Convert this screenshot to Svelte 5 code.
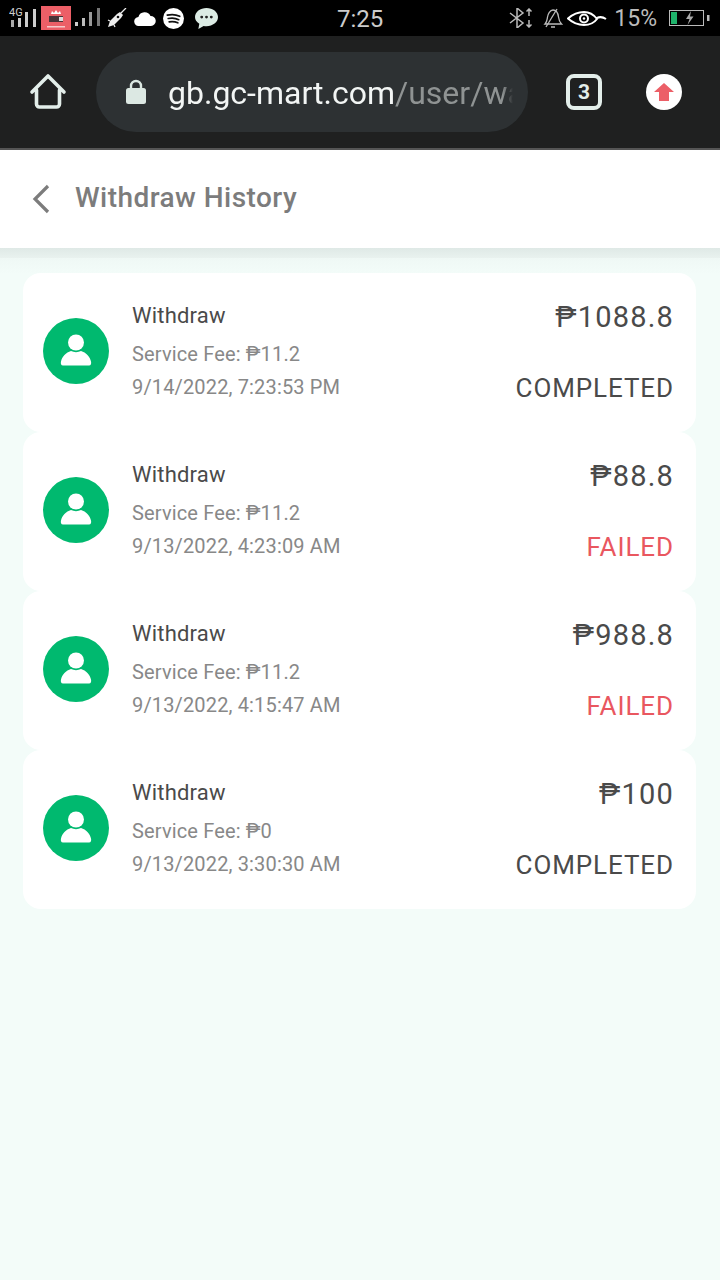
<script>
  const records = [
    { amount: '₱1088.8', fee: '₱11.2', time: '9/14/2022, 7:23:53 PM', status: 'COMPLETED' },
    { amount: '₱88.8', fee: '₱11.2', time: '9/13/2022, 4:23:09 AM', status: 'FAILED' },
    { amount: '₱988.8', fee: '₱11.2', time: '9/13/2022, 4:15:47 AM', status: 'FAILED' },
    { amount: '₱100', fee: '₱0', time: '9/13/2022, 3:30:30 AM', status: 'COMPLETED' }
  ];
</script>

<div class="page">
  <div class="statusbar">
    <div class="status-left">
      <svg width="28" height="22" viewBox="0 0 28 22">
        <text x="0" y="9" class="tiny">4G</text>
        <rect x="2" y="13" width="3" height="7" fill="#aaa" />
        <rect x="9" y="11" width="3" height="9" fill="#ccc" />
        <rect x="16" y="5" width="3" height="15" fill="#ccc" />
        <rect x="24" y="2" width="3" height="18" fill="#ccc" />
      </svg>
      <svg width="30" height="24" viewBox="0 0 30 24">
        <rect width="30" height="24" fill="#ec5f67" />
        <path d="M10 8l1-3 2 2 2-3 2 3 2-2 1 3z" fill="#fff" />
        <rect x="8" y="10" width="14" height="6" fill="#4a3438" />
        <rect x="18" y="11" width="4" height="4" fill="#ddd" />
        <rect x="6" y="20" width="18" height="1.500" fill="#f5c9cb" />
      </svg>
      <svg width="28" height="20" viewBox="0 0 28 20">
        <rect x="0" y="14" width="3" height="4" fill="#ccc" />
        <rect x="7" y="10" width="3" height="8" fill="#bbb" />
        <rect x="14" y="4" width="3" height="14" fill="#999" />
        <rect x="22" y="0" width="3" height="18" fill="#777" />
      </svg>
      <svg width="20" height="20" viewBox="0 0 20 20">
        <path d="M1 19l2-6 7-7 3-2 3 3-2 3-7 7z" fill="#eee" />
        <path d="M14 5l5-5M3 13l-2-1M7 17l1 2" stroke="#eee" stroke-width="1.300" />
        <circle cx="11" cy="9" r="1.300" fill="#111" />
      </svg>
      <svg class="cloud" width="22" height="15" viewBox="0 0 22 15">
        <path d="M5 15a4.500 4.500 0 0 1-.6-9A6.500 6.500 0 0 1 16.500 5 5 5 0 0 1 17 15z" fill="#fff" />
      </svg>
      <svg class="spot" width="21" height="21" viewBox="0 0 22 22">
        <circle cx="11" cy="11" r="11" fill="#fff" />
        <path d="M4.500 7.500c4-1 9-.8 13 1.200M5.500 11c3.500-.8 7.500-.6 11 1.200M6.500 14.500c3-.6 6-.4 9 1" stroke="#111" stroke-width="1.800" fill="none" stroke-linecap="round" />
      </svg>
      <svg class="chat" width="25" height="23" viewBox="0 0 25 24">
        <path d="M12.500 1C19 1 24.500 5 24.500 10.500S19 20 12.500 20c-1 0-2 0-3-.3L4 23l1-5.500C2 15.800.5 13.300.5 10.500.5 5 6 1 12.500 1z" fill="#dcebe4" />
        <circle cx="7.500" cy="10.500" r="1.500" fill="#222" />
        <circle cx="12.500" cy="10.500" r="1.500" fill="#222" />
        <circle cx="17.500" cy="10.500" r="1.500" fill="#222" />
      </svg>
    </div>
    <span class="clock">7:25</span>
    <div class="status-right">
      <svg width="25" height="20" viewBox="0 0 25 20">
        <path d="M1 5l13 10-6 5V0l6 5L1 15" stroke="#bbb" stroke-width="1.500" fill="none" />
        <path d="M20 1v7M17.500 3.500L20 1l2.500 2.500M20 12v7M17.500 16.500L20 19l2.500-2.500" stroke="#bbb" stroke-width="1.500" fill="none" />
      </svg>
      <svg class="bell" width="20" height="20" viewBox="0 0 20 20">
        <path d="M2 16c2-2 2-4 2.500-7S7 2 10 2s5 3 5.500 7 1 5 3 7zM8 19h4" stroke="#bbb" stroke-width="1.300" fill="none" />
        <path d="M14 1L3 19" stroke="#bbb" stroke-width="1.300" />
      </svg>
      <svg class="eye" width="40" height="15" viewBox="0 0 40 15">
        <path d="M1 7.500C6 3 11 1 17 1s10 3 13 7c-3 4-8 6-13 6S6 12 1 7.500zM30 7c3-1.500 6-1 9 1" stroke="#fff" stroke-width="2" fill="none" />
        <circle cx="17" cy="7.500" r="4" fill="none" stroke="#fff" stroke-width="2" />
        <circle cx="17" cy="7.500" r="1.200" fill="#fff" />
      </svg>
      <span class="pct">15%</span>
      <svg class="batt" width="41" height="16" viewBox="0 0 41 16">
        <rect x="0.500" y="0.500" width="34" height="15" fill="none" stroke="#bbb" />
        <rect x="2" y="2" width="6" height="12" fill="#1fb36b" />
        <rect x="38" y="5" width="2.500" height="6" fill="#bbb" />
        <path d="M22 1l-5 8h3.500l-2 6 6-8.500h-3.500z" fill="#aaa" />
      </svg>
    </div>
  </div>

  <div class="toolbar">
    <svg class="home" width="38" height="38" viewBox="0 0 38 38">
      <path d="M3 19L19 3l16 16M7.500 17v14a3 3 0 0 0 3 3h17a3 3 0 0 0 3-3V17" stroke="#e3eeea" stroke-width="3.600" fill="none" stroke-linecap="round" stroke-linejoin="round" />
    </svg>
    <div class="omnibox">
      <svg class="lock" width="20" height="26" viewBox="0 0 20 26">
        <path d="M5 10V7a5 5 0 0 1 10 0v3" stroke="#dce8e3" stroke-width="2.400" fill="none" />
        <rect y="9" width="20" height="16" rx="2.500" fill="#dce8e3" />
      </svg>
      <div class="url"><span class="host">gb.gc-mart.com</span><span class="path">/user/wa</span></div>
    </div>
    <div class="tabs">3</div>
    <div class="update">
      <svg width="20" height="18" viewBox="0 0 20 18">
        <path d="M10 0l10 9h-5v9H5V9H0z" fill="#ec5f67" />
      </svg>
    </div>
  </div>

  <header class="title-bar">
    <svg class="back" width="20" height="30" viewBox="0 0 20 30">
      <path d="M17 2L4 15l13 13" stroke="#7c7c7c" stroke-width="3.200" fill="none" />
    </svg>
    <h1>Withdraw History</h1>
  </header>

  <main class="list">
    {#each records as r}
      <div class="card">
        <div class="avatar">
          <svg width="32" height="32" viewBox="0 0 32 32">
            <circle cx="16" cy="8.500" r="8" fill="#fff" />
            <path d="M3 31.500h26c2 0 2.500-2 2-4-1-5-5-9-10-10.500-3 1.500-7 1.500-10 0C6 18.500 2 22.500 1 27.500c-.5 2 0 4 2 4z" fill="#fff" />
          </svg>
        </div>
        <div class="info">
          <div class="name">Withdraw</div>
          <div class="sub fee">Service Fee: {r.fee}</div>
          <div class="sub">{r.time}</div>
        </div>
        <div class="right">
          <div class="amount">{r.amount}</div>
          <div class="status" class:failed={r.status === 'FAILED'}>{r.status}</div>
        </div>
      </div>
    {/each}
  </main>
</div>

<style>
  :global(body) {
    margin: 0;
    background: #f3fcf9;
  }

  .page {
    width: 720px;
    min-height: 1280px;
    background: #f3fcf9;
    font-family: Roboto, "Liberation Sans", sans-serif;
  }

  .statusbar {
    height: 36px;
    background: #000;
    display: flex;
    align-items: center;
    justify-content: space-between;
    position: relative;
    padding: 0 10px 0 9px;
    box-sizing: border-box;
  }

  .status-left,
  .status-right {
    display: flex;
    align-items: center;
  }

  .status-left {
    gap: 4px;
  }

  .cloud {
    margin-left: 3px;
  }

  .spot {
    margin-left: 3px;
  }

  .chat {
    margin-left: 6px;
  }

  .status-right {
    gap: 6px;
  }

  .bell {
    margin-left: 3px;
  }

  .eye {
    margin-left: -2px;
  }

  .tiny {
    font-size: 11px;
    fill: #ccc;
  }

  .clock {
    color: #ccc;
    font-size: 24px;
    position: absolute;
    left: 337px;
    top: 5px;
  }

  .pct {
    color: #bbb;
    font-size: 23px;
    margin: 0 6px 0 1px;
  }

  .toolbar {
    height: 114px;
    box-sizing: border-box;
    background: #1f2020;
    border-bottom: 2px solid #555;
    display: flex;
    align-items: center;
    padding: 0 0 0 29px;
  }

  .omnibox {
    margin-left: 29px;
    width: 432px;
    height: 80px;
    background: #2d3133;
    border-radius: 40px;
    display: flex;
    align-items: center;
    padding: 0 15px 0 30px;
    box-sizing: border-box;
  }

  .url {
    margin-left: 22px;
    padding-top: 2px;
    overflow: hidden;
    white-space: nowrap;
    font-size: 32px;
    flex: 1;
    mask-image: linear-gradient(to right, #000 97%, transparent);
  }

  .host {
    color: #f2f5f4;
  }

  .path {
    color: #8f9393;
  }

  .tabs {
    margin-left: 38px;
    width: 36px;
    height: 36px;
    box-sizing: border-box;
    border: 4px solid #e3eeea;
    border-radius: 8px;
    color: #e3eeea;
    font-size: 21px;
    font-weight: 700;
    display: flex;
    align-items: center;
    justify-content: center;
  }

  .update {
    margin-left: 44px;
    width: 36px;
    height: 36px;
    border-radius: 50%;
    background: #fff;
    display: flex;
    align-items: center;
    justify-content: center;
  }

  .title-bar {
    height: 98px;
    background: #fff;
    display: flex;
    align-items: center;
    padding-left: 31px;
    position: relative;
  }

  .title-bar::after {
    content: '';
    position: absolute;
    left: 0;
    right: 0;
    top: 100%;
    height: 10px;
    background: linear-gradient(#dfe9e6, #e9f2ef);
  }

  h1 {
    margin: 0 0 4px 24px;
    font-size: 28px;
    font-weight: 500;
    color: #7c7c7c;
    letter-spacing: 0.45px;
  }

  .list {
    padding: 25px 24px 0 23px;
    background: linear-gradient(#eff8f5 10px, #f3fcf9 26px) no-repeat;
  }

  .card {
    height: 159px;
    background: #fff;
    border-radius: 18px;
    display: flex;
    align-items: center;
    padding: 0 23px 0 20px;
    box-sizing: border-box;
  }

  .avatar {
    width: 66px;
    height: 66px;
    margin-bottom: 4px;
    border-radius: 50%;
    background: #00b96f;
    display: flex;
    align-items: center;
    justify-content: center;
  }

  .avatar svg {
    display: block;
    margin-top: -2px;
  }

  .info {
    flex: 1;
    margin-left: 23px;
  }

  .name {
    font-size: 22px;
    line-height: 30px;
    color: #4a4a4a;
    letter-spacing: 0.2px;
  }

  .sub {
    font-size: 20px;
    line-height: 33px;
    color: #888;
    letter-spacing: 0.15px;
  }

  .fee {
    margin-top: 7px;
  }

  .right {
    text-align: right;
    margin-right: -1px;
  }

  .amount {
    font-size: 29px;
    line-height: 36px;
    color: #4a4a4a;
    letter-spacing: 1.2px;
  }

  .status {
    margin-top: 35px;
    font-size: 26px;
    line-height: 36px;
    color: #4a4a4a;
    letter-spacing: 0.9px;
  }

  .failed {
    color: #e9575f;
  }
</style>
